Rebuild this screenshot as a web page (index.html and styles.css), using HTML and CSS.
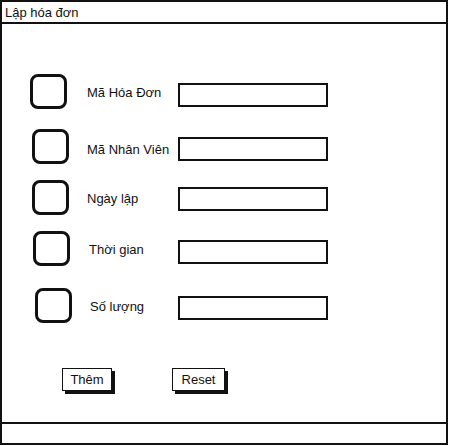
FILE: index.html
```html
<!DOCTYPE html>
<html lang="vi">
  <head>
    <meta charset="UTF-8" />
    <meta name="viewport" content="width=device-width, initial-scale=1.0" />
    <title>Lập hóa đơn</title>
    <link rel="stylesheet" href="styles.css">
  </head>
  <body>
    <div class="window">
      <div class="title-bar">Lập hóa đơn</div>

      <div class="content">
        <div class="row">
          <span class="box"></span>
          <label class="label">Mã Hóa Đơn</label>
          <input class="field" type="text" />
        </div>
        <div class="row row-2">
          <span class="box"></span>
          <label class="label">Mã Nhân Viên</label>
          <input class="field" type="text" />
        </div>
        <div class="row row-3">
          <span class="box"></span>
          <label class="label">Ngày lập</label>
          <input class="field" type="text" />
        </div>
        <div class="row row-4">
          <span class="box"></span>
          <label class="label">Thời gian</label>
          <input class="field" type="text" />
        </div>
        <div class="row row-5">
          <span class="box"></span>
          <label class="label">Số lượng</label>
          <input class="field" type="text" />
        </div>

        <div class="actions">
          <button class="button">Thêm</button>
          <button class="button button-reset">Reset</button>
        </div>
      </div>

      <div class="status-bar"></div>
    </div>
  </body>
</html>
```

FILE: styles.css
```css
* {
  box-sizing: border-box;
}

body {
  margin: 0;
  background: #fff;
  font-family: "Liberation Sans", Arial, sans-serif;
  font-size: 13px;
  color: #111;
}

.window {
  width: 448px;
  height: 445px;
  border: 2px solid #111;
  display: flex;
  flex-direction: column;
}

.title-bar {
  height: 22px;
  border-bottom: 2px solid #111;
  padding: 3px 0 0 3px;
  line-height: 16px;
}

.content {
  flex: 1;
  padding: 50px 0 0 28px;
}

/* each row: checkbox | label | text field (field column starts at x=178) */
.row {
  display: flex;
  align-items: flex-start;
}
.row-2 {
  margin-top: 20px;
  padding-left: 2px;
}
.row-3 {
  margin-top: 16px;
  padding-left: 2px;
}
.row-4 {
  margin-top: 16px;
  padding-left: 3px;
}
.row-5 {
  margin-top: 22px;
  padding-left: 5px;
}

.box {
  width: 37px;
  height: 35px;
  border: 3px solid #111;
  border-radius: 8px;
  flex-shrink: 0;
}

.label {
  width: 91px;
  margin-left: 20px;
  margin-top: 11px;
  line-height: 16px;
  flex-shrink: 0;
}
.row-2 .label,
.row-3 .label {
  margin-left: 18px;
}
.row-2 .label {
  margin-top: 13px;
}
.row-4 .label {
  margin-left: 19px;
  width: 89px;
}
.row-5 .label {
  margin-left: 18px;
  width: 88px;
}

.field {
  width: 150px;
  height: 24px;
  margin-top: 9px;
  border: 2px solid #111;
  border-radius: 0;
  background: #fff;
}
.row-2 .field,
.row-5 .field {
  margin-top: 8px;
}
.row-3 .field {
  margin-top: 7px;
}

.actions {
  display: flex;
  padding-left: 32px;
  margin-top: 45px;
}

.button {
  font-family: "Liberation Sans", Arial, sans-serif;
  font-size: 13px;
  color: #111;
  background: #fff;
  border: 1.5px solid #111;
  box-shadow: 3px 3px 0 #111;
  height: 23px;
  width: 50px;
  padding: 0;
  line-height: 19px;
}

.button-reset {
  width: 53px;
  margin-left: 60px;
}

.status-bar {
  height: 21px;
  border-top: 2px solid #111;
}
```
